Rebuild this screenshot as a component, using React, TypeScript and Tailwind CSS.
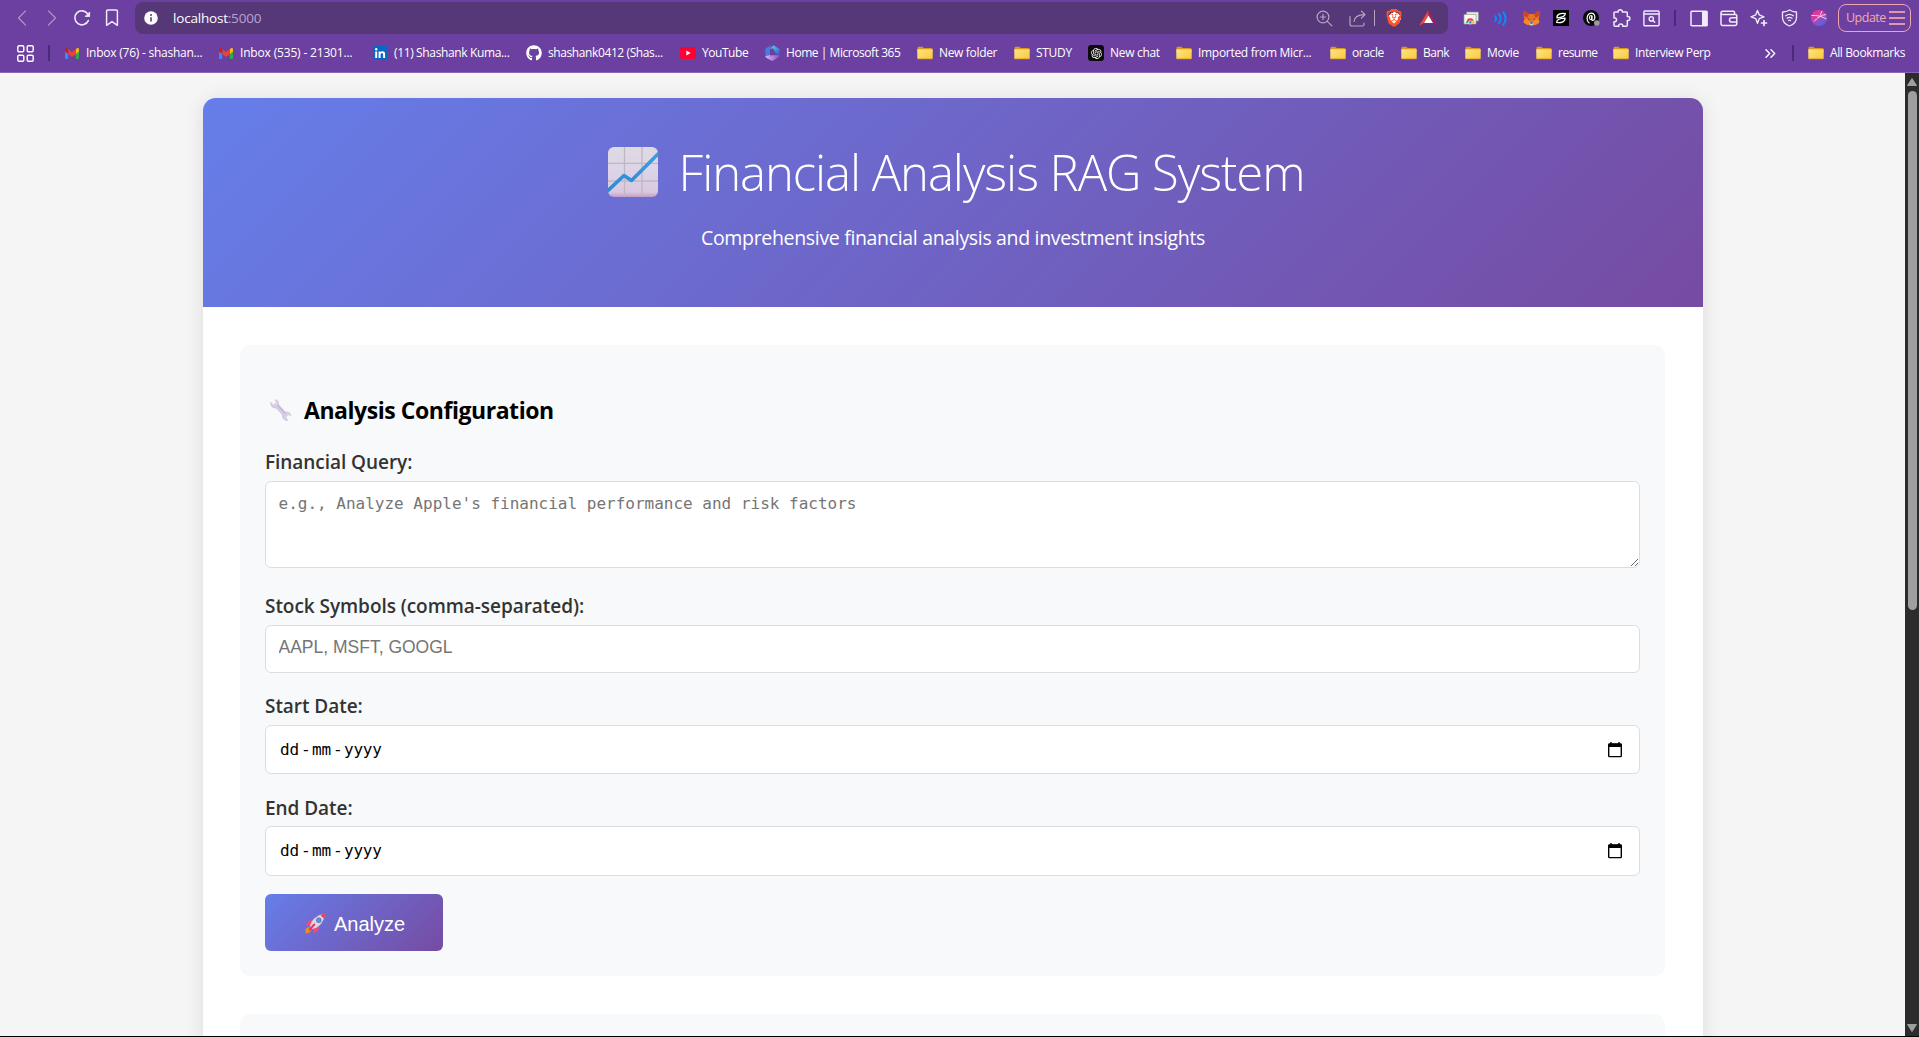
import React from "react";
import { FaBrave, FaGithub } from "react-icons/fa6";
import { RiOpenaiFill } from "react-icons/ri";

type Kids = { children?: React.ReactNode };

/* ---------- toolbar icons ---------- */

const stroke = { fill: "none", stroke: "currentColor", strokeLinecap: "round", strokeLinejoin: "round" } as const;

const Chevron = ({ right = false }: { right?: boolean }) => (
  <svg width="10" height="16" viewBox="0 0 10 16" {...stroke} strokeWidth="1.3">
    <path d={right ? "M1.5 1 8.5 8 1.5 15" : "M8.5 1 1.5 8 8.5 15"} />
  </svg>
);

const Reload = () => (
  <svg width="18" height="18" viewBox="0 0 18 18" {...stroke} strokeWidth="1.6">
    <path d="M15.3 11.6A7 7 0 1 1 14.6 4.8" />
    <path d="M16.6 3.4v4h-4z" fill="currentColor" strokeWidth="1" />
  </svg>
);

const BookmarkIcon = () => (
  <svg width="14" height="18" viewBox="0 0 14 18" {...stroke} strokeWidth="1.5">
    <path d="M2.6 1h8.8a1 1 0 0 1 1 1v14.3L7 12.6l-5.4 3.7V2a1 1 0 0 1 1-1z" />
  </svg>
);

const Info = () => (
  <svg width="14" height="14" viewBox="0 0 14 14">
    <circle cx="7" cy="7" r="6.8" fill="#fff" />
    <path d="M7 6.2v4.2" stroke="#563879" strokeWidth="1.6" />
    <circle cx="7" cy="4" r="1" fill="#563879" />
  </svg>
);

const ZoomIn = () => (
  <svg width="17" height="17" viewBox="0 0 17 17" {...stroke} strokeWidth="1.2">
    <circle cx="7" cy="7" r="5.9" />
    <path d="M11.3 11.3l4.6 4.6M7 4.3v5.4M4.3 7h5.4" />
  </svg>
);

const Share = () => (
  <svg width="17" height="17" viewBox="0 0 17 17" {...stroke} strokeWidth="1.2">
    <path d="M1 6.5V14a2 2 0 0 0 2 2h10.5a1.5 1.5 0 0 0 1.5-1.5V13" />
    <path d="M5 11.5C5.3 7 8 4.8 15.5 4.600M12.5 1.2 16 4.600 12.5 8" />
  </svg>
);

const Bat = () => (
  <svg width="19" height="16" viewBox="0 0 19 16">
    <path d="M9.5.3 0 16l5-3 4.5-7.5z" fill="#ff4724" />
    <path d="M9.5.3 19 16l-5-3-4.5-7.5z" fill="#9e1f63" />
    <path d="M0 16h19l-5-3H5z" fill="#662d91" />
    <path d="M9.5 5.5 14 13H5z" fill="#fff" />
  </svg>
);

const CardsIcon = () => (
  <svg width="16" height="16" viewBox="0 0 16 16">
    <path d="M3.5 2h12v9h-12z" fill="#e8eae8" stroke="#8a8f8a" strokeWidth=".7" />
    <path d="M1 4.5h12v9.5H1z" fill="#f6f8f6" stroke="#9a9f9a" strokeWidth=".7" />
    <path d="M3 13.5a4.2 4.2 0 0 1 2-4.1L7 12z" fill="#34a853" />
    <path d="M4 9.8a4.3 4.3 0 0 1 6.5 0L8.5 12H6z" fill="#ea4335" />
    <path d="M10.3 9.6a4.2 4.2 0 0 1 1.1 3.9H8.5z" fill="#fbbc05" />
    <circle cx="7.3" cy="12.4" r="1.7" fill="#4285f4" stroke="#fff" strokeWidth=".6" />
  </svg>
);

const Waves = () => (
  <svg width="14" height="15" viewBox="0 0 14 15" fill="none" stroke="#0a8cff" strokeWidth="2" strokeLinecap="round">
    <path d="M1.3 5.2a4 4 0 0 1 0 4.6M5 3a7 7 0 0 1 0 9M9.3 1.2a10 10 0 0 1 0 12.6" />
  </svg>
);

const Fox = () => (
  <svg width="17" height="16" viewBox="0 0 17 16">
    <path d="M.8.5 6 4h5l5.2-3.5.3 5-.9 4 .9 3-4 2.5-2.5.5h-3L4.5 15l-4-2.5.9-3-.9-4z" fill="#e8702a" />
    <path d="M.8.5 6 4 4.5 7.5.9 6zM16.2.5 11 4l1.5 3.5L16.1 6z" fill="#c9481d" />
    <path d="M1.4 9.5 6 9l1 4-2.5 2-4-2.5zM15.6 9.5 11 9l-1 4 2.5 2 4-2.5z" fill="#f5892f" />
    <path d="M4.5 8.5l2 .5-.3 1.3zM12.5 8.5l-2 .5.3 1.3z" fill="#23344a" />
    <path d="M7 12h3l.6 2.300-1 1H7.400l-1-1z" fill="#d8d0cc" />
    <path d="M7.5 12.2h2l.3 1.3H7.2z" fill="#23344a" />
  </svg>
);

const BlackSquare = () => (
  <svg width="16" height="16" viewBox="0 0 16 16">
    <path d="M0 0h16v16H0z" fill="#000" />
    <g fill="none" stroke="#fff" strokeLinecap="round" strokeWidth="1.3">
      <path d="M4 7.800C3.600 4.500 7.500 2.600 12.300 3.600 12.300 6 9.500 7.600 4 7.800z" />
      <path d="M12 8.200C12.400 11.500 8.500 13.400 3.700 12.400 3.700 10 6.500 8.400 12 8.200z" />
    </g>
  </svg>
);

const AtBadge = () => (
  <svg width="17" height="16" viewBox="0 0 17 16">
    <circle cx="8" cy="8" r="8" fill="#0b0b0b" />
    <path d="M6.5 13.2C4.2 12 3.6 8.5 4.6 5.8 5.8 2.6 10 2.2 11.4 5c1 2.3.2 5.4-1.6 5.400C8.500 10.400 8.300 8.500 9 5.500" fill="none" stroke="#fff" strokeWidth="1.2" />
    <ellipse cx="7.8" cy="7.6" rx="1.3" ry="2.1" fill="none" stroke="#fff" strokeWidth="1.1" />
    <circle cx="13.8" cy="13" r="2.8" fill="#9a9a9a" />
  </svg>
);

const Puzzle = () => (
  <svg width="19" height="19" viewBox="0 0 19 19" {...stroke} strokeWidth="1.5">
    <path d="M3 3h3.2C5.8 1.5 7 .8 8.2.8s2.5.7 2.1 2.2h4.2a.8.8 0 0 1 .8.8v3.8c1.6-.4 2.6.6 2.6 1.9s-1 2.3-2.6 1.9v4.8a1 1 0 0 1-1 1h-3.6c.3-1.4-.5-2.3-1.9-2.3s-2.3.9-1.9 2.3H3a1 1 0 0 1-1-1v-3.4c1.7.2 2.5-.8 2.5-2S3.7 8.7 2 8.900V4a1 1 0 0 1 1-1z" />
  </svg>
);

const SearchTab = () => (
  <svg width="17" height="17" viewBox="0 0 17 17" {...stroke} strokeWidth="1.4">
    <rect x=".9" y="1" width="15.2" height="14.8" rx="1" />
    <path d="M1 4h15" />
    <circle cx="8.3" cy="8.9" r="2.1" />
    <path d="M9.9 10.5l1.8 1.8" />
  </svg>
);

const Sidebar = () => (
  <svg width="18" height="17" viewBox="0 0 18 17">
    <rect x="1" y="1.2" width="16" height="14.6" rx=".8" fill="none" stroke="currentColor" strokeWidth="1.5" />
    <path d="M12 1h5.5v15H12z" fill="currentColor" />
  </svg>
);

const Wallet = () => (
  <svg width="18" height="17" viewBox="0 0 18 17" {...stroke} strokeWidth="1.5">
    <path d="M14.5 4.5V2.2a1 1 0 0 0-1-1H2.5A1.5 1.5 0 0 0 1 2.8c0 1 .7 1.7 1.5 1.7h13.2a1 1 0 0 1 1 1V14a1.5 1.5 0 0 1-1.5 1.5H2.5A1.5 1.5 0 0 1 1 14V2.8" />
    <path d="M16.7 7.7h-5a2.2 2.2 0 0 0 0 4.4h5" />
  </svg>
);

const Sparkle = () => (
  <svg width="18" height="18" viewBox="0 0 18 18" {...stroke} strokeWidth="1.4">
    <path d="M7.5 1.5l1.7 4.3 4.8 2-4.8 1.9-1.7 4.6-1.7-4.6L1 7.8l4.8-2z" />
    <path d="M14 11.5v5M11.5 14h5" strokeWidth="1.7" />
  </svg>
);

const Vpn = () => (
  <svg width="17" height="18" viewBox="0 0 17 18" {...stroke} strokeWidth="1.3">
    <path d="M8.5 1c2 1.3 4.5 2 7 2v5.5c0 4-3 7-7 8.5-4-1.5-7-4.5-7-8.5V3c2.5 0 5-.7 7-2z" />
    <path d="M4.7 6.8c2.2-1.6 5.4-1.6 7.6 0M6 9.2c1.5-1 3.5-1 5 0M7.5 11.5c.6-.4 1.4-.4 2 0" />
  </svg>
);

const Avatar = () => (
  <svg width="16" height="16" viewBox="0 0 16 16">
    <defs>
      <linearGradient id="av" x1="0.2" y1="0" x2="0.8" y2="1">
        <stop offset=".3" stopColor="#e0389a" />
        <stop offset="1" stopColor="#3a6cf0" />
      </linearGradient>
    </defs>
    <circle cx="8" cy="8" r="8" fill="url(#av)" />
    <path d="M.5 5.5C6 5 11 6.5 15.5 9M3 11.5C6 8 10 5 15 4.5M9 5.5l2-4.5" stroke="#fbd3ea" strokeWidth="1" fill="none" />
  </svg>
);

/* ---------- bookmark icons ---------- */

const Gmail = () => (
  <svg width="14" height="11" viewBox="0 0 14 11">
    <path d="M0 3h3.2v8H1a1 1 0 0 1-1-1z" fill="#4285f4" />
    <path d="M10.8 3H14v7a1 1 0 0 1-1 1h-2.2z" fill="#34a853" />
    <path d="M10.8 1.2 12 .3c.9-.6 2 0 2 1.1v2L10.8 6z" fill="#fbbc04" />
    <path d="M3.2 6V1.2L7 4l3.8-2.8V6L7 8.9z" fill="#ea4335" />
    <path d="M0 3.4v-2C0 .3 1.1-.3 2 .3l1.2.9V6z" fill="#c5221f" />
  </svg>
);

const LinkedIn = () => (
  <svg width="14" height="14" viewBox="0 0 14 14">
    <rect width="14" height="14" rx="1" fill="#0a66c2" />
    <circle cx="3.2" cy="3.3" r="1.2" fill="#fff" />
    <path d="M2.2 5.4h2V12h-2zM5.6 5.4h1.9v.9c.9-1.5 4.6-1.5 4.6 1.7v4h-2V8.6c0-2-2.5-1.8-2.5 0V12h-2z" fill="#fff" />
  </svg>
);

const YouTube = () => (
  <svg width="16" height="12" viewBox="0 0 16 12">
    <rect width="16" height="12" rx="3" fill="#f03" />
    <path d="M6.3 3.5v5l4.3-2.5z" fill="#fff" />
  </svg>
);

const M365 = () => (
  <svg width="15" height="16" viewBox="0 0 15 16">
    <defs>
      <linearGradient id="ma" x1="0" y1="0" x2="1" y2="1">
        <stop offset="0" stopColor="#66d8f2" />
        <stop offset="1" stopColor="#2b57c8" />
      </linearGradient>
      <linearGradient id="mb" x1="0" y1="0" x2="1" y2="0">
        <stop offset="0" stopColor="#d8b8f0" />
        <stop offset="1" stopColor="#8a4fc8" />
      </linearGradient>
    </defs>
    <path d="M6 .3 1.2 3A2 2 0 0 0 .3 4.700v6.600L3 12.700 5 11V4z" fill="#4a7be0" />
    <path d="M5 4 8.5.3l5.3 3.1a2 2 0 0 1 .9 1.7v5.2L10.5 8 8 3.5z" fill="url(#ma)" />
    <path d="M.3 11.3 5 10l9.7.3c0 .8-.3 1.3-1 1.7l-5.4 3.5a2 2 0 0 1-2 0L1.2 12.7z" fill="url(#mb)" />
    <path d="M5 4.5 8 3.5l2.5 4.5v2L5 11.5z" fill="#6c40a0" opacity=".4" />
  </svg>
);

const Folder = () => (
  <svg width="16" height="14" viewBox="0 0 16 14">
    <defs>
      <linearGradient id="fo" x1="0" y1="0" x2="1" y2="1">
        <stop offset="0" stopColor="#ffe486" />
        <stop offset="1" stopColor="#fbc93a" />
      </linearGradient>
    </defs>
    <path d="M.5 2A1.3 1.3 0 0 1 1.8.7h3.5l1.500 1.300h7.400a1.300 1.300 0 0 1 1.300 1.300V6H.5z" fill="#d9991b" />
    <path d="M.3 3.2h15.400v8.700a1.200 1.200 0 0 1-1.200 1.200H1.500A1.200 1.200 0 0 1 .3 11.900z" fill="url(#fo)" />
    <path d="M.6 12.9h14.800" stroke="#c9961f" strokeWidth=".8" />
  </svg>
);

const ChatGpt = () => (
  <span className="flex size-4 items-center justify-center rounded-[3px] bg-[#0c0c0c] text-white">
    <RiOpenaiFill size={13} />
  </span>
);

const AppsGrid = () => (
  <svg width="17" height="17" viewBox="0 0 17 17" fill="none" stroke="currentColor" strokeWidth="1.4">
    <rect x=".8" y=".8" width="6" height="6" rx="1.2" />
    <rect x="10.2" y=".8" width="6" height="6" rx="1.2" />
    <rect x=".8" y="10.2" width="6" height="6" rx="1.2" />
    <rect x="10.2" y="10.2" width="6" height="6" rx="1.2" />
  </svg>
);

/* ---------- page illustrations ---------- */

const ChartEmoji = () => (
  <svg className="shrink-0" width="50" height="50" viewBox="0 0 50 50">
    <defs>
      <linearGradient id="cb" x1="0" y1="0" x2="0" y2="1">
        <stop offset="0" stopColor="#dedbe2" />
        <stop offset=".5" stopColor="#ddd3e9" />
        <stop offset=".9" stopColor="#d9c8e0" />
        <stop offset="1" stopColor="#c49fc4" />
      </linearGradient>
      <linearGradient id="cl" x1="0" y1="0" x2="0" y2="1">
        <stop offset="0" stopColor="#2fa3ea" />
        <stop offset="1" stopColor="#3487cf" />
      </linearGradient>
      <clipPath id="cc">
        <rect width="50" height="50" rx="6" />
      </clipPath>
    </defs>
    <g clipPath="url(#cc)">
      <rect width="50" height="50" fill="url(#cb)" />
      <path d="M16.5 0v50M34 0v50M0 16.3h50M0 34h50" stroke="#bfb7c4" strokeWidth="1.3" />
      <path d="M-1 44.5 16 28.5l7.5 5L51 6" fill="none" stroke="url(#cl)" strokeWidth="3.6" strokeLinejoin="round" />
    </g>
  </svg>
);

const WrenchEmoji = () => (
  <svg className="shrink-0" width="22" height="22" viewBox="0 0 22 22">
    <path d="M.8 3.200 3.600 5.600 6 3.600 4.200.5C7.800.2 9.800 2.700 9 5.500l6.600 7.200c3-.6 6 1.500 5.900 5l-2.800-1.700-2.300 1.900 1.500 3.500c-3.600.2-6-2.400-5.300-5.600L6 8.700C3 9.400.3 6.800.8 3.200z" fill="#d9d0e5" />
    <path d="M7.400 6l8 8.700" stroke="#c6b4de" strokeWidth="1.6" />
    <path d="M.8 3.200C.3 6.800 3 9.400 6 8.700l6.600 7.100c-.7 3.200 1.700 5.800 5.300 5.600" fill="none" stroke="#c4b2d6" strokeWidth=".7" />
  </svg>
);

const RocketEmoji = () => (
  <svg className="shrink-0" width="21" height="21" viewBox="0 0 21 21">
    <path d="M1 15.5c2-2 4.5-1.5 5 .5s-1.5 4-5 4.5c-.7-1.5-.7-3.5 0-5z" fill="#f08a2c" />
    <path d="M7.5 7.5C4.5 6.6 2.3 8.5 1 12.2l5 .8zM13.5 13.5c.9 3-1 5.5-4.7 6.8l-.8-5z" fill="#f8457d" />
    <path d="M5 13.5C6 7.5 11.5 1.8 20 .8c-1 8.7-6.5 14.2-12.5 15.2z" fill="#dcd5e2" />
    <path d="M15.5 2c1.5-.7 3-1.1 4.5-1.2-.1 1.6-.5 3.2-1.2 4.7z" fill="#f5315c" />
    <circle cx="13.8" cy="7.3" r="2.7" fill="#7a6fa8" />
    <circle cx="13.8" cy="7.3" r="1.9" fill="#3f9fea" />
    <path d="M9.3 11.500l-4.600 5" stroke="#f5315c" strokeWidth="2" strokeLinecap="round" />
  </svg>
);

const Calendar = () => (
  <svg width="14" height="16" viewBox="0 0 14 16">
    <path d="M3 0v3M11 0v3" stroke="#000" strokeWidth="1.4" />
    <rect x=".7" y="2" width="12.6" height="12.6" rx=".8" fill="none" stroke="#000" strokeWidth="1.4" />
    <path d="M.5 1.7h13V5H.5z" fill="#000" />
  </svg>
);

/* ---------- browser chrome ---------- */

const Cell = ({ children }: Kids) => <span className="flex w-[30px] shrink-0 items-center justify-center">{children}</span>;

const Toolbar = () => (
  <div className="flex h-9 shrink-0 items-center pl-[7px] text-[#f1eaf8]">
    <span className="flex text-[#a98fc9]">
      <Cell><Chevron /></Cell>
      <Cell><Chevron right /></Cell>
    </span>
    <Cell><Reload /></Cell>
    <Cell><BookmarkIcon /></Cell>
    <div className="ml-2 flex h-8 w-[1313px] shrink-0 items-center rounded-lg bg-[#563879] pr-[3px] pl-[9px]">
      <Info />
      <span className="ml-[15px] text-[13.5px] tracking-[-0.2px] text-white">
        localhost<span className="text-[#b8a3cf]">:5000</span>
      </span>
      <span className="ml-auto flex items-center text-[#b3a5c4]">
        <span className="flex w-[34px] justify-center"><ZoomIn /></span>
        <span className="flex w-[33px] justify-center"><Share /></span>
        <span className="mr-0.5 h-4 w-px bg-[#b3a5c4]" />
        <span className="flex w-[34px] justify-center">
          <span className="flex size-[17px] items-center justify-center bg-[radial-gradient(circle,#fff_50%,transparent_52%)] text-[#fb542b]">
            <FaBrave size={18} className="shrink-0" />
          </span>
        </span>
        <span className="flex w-[34px] justify-center"><Bat /></span>
      </span>
    </div>
    <div className="ml-2 flex items-center">
      <Cell><CardsIcon /></Cell>
      <Cell><Waves /></Cell>
      <Cell><Fox /></Cell>
      <Cell><BlackSquare /></Cell>
      <Cell><AtBadge /></Cell>
      <Cell><Puzzle /></Cell>
      <Cell><SearchTab /></Cell>
      <span className="flex w-[18px] justify-center"><span className="h-4 w-0.5 bg-[#4b2a75]" /></span>
      <Cell><Sidebar /></Cell>
      <Cell><Wallet /></Cell>
      <Cell><Sparkle /></Cell>
      <Cell><Vpn /></Cell>
      <Cell><Avatar /></Cell>
    </div>
    <div className="ml-1 flex h-7 w-[73px] shrink-0 items-center justify-between rounded-lg border border-[#f0a5b0] pr-[5px] pl-[7px] text-[#f5a9ae]">
      <span className="text-[12.5px] tracking-[-0.5px]">Update</span>
      <span className="flex flex-col gap-[4px]">
        <span className="h-0.5 w-4 bg-[#dc97ac]" />
        <span className="h-0.5 w-4 bg-[#dc97ac]" />
        <span className="h-0.5 w-4 bg-[#dc97ac]" />
      </span>
    </div>
  </div>
);

const bookmarks: { label: string; icon: React.ReactNode; cls: string }[] = [
  { label: "Inbox (76) - shashan...", icon: <Gmail />, cls: "w-[154px] tracking-[-0.24px]" },
  { label: "Inbox (535) - 21301...", icon: <Gmail />, cls: "w-[154px] tracking-[-0.17px]" },
  { label: "(11) Shashank Kuma...", icon: <LinkedIn />, cls: "w-[154px] tracking-[-0.36px]" },
  { label: "shashank0412 (Shas...", icon: <FaGithub size={16} />, cls: "w-[154px] tracking-[-0.4px]" },
  { label: "YouTube", icon: <YouTube />, cls: "w-[84px] tracking-[-0.45px]" },
  { label: "Home | Microsoft 365", icon: <M365 />, cls: "w-[153px] tracking-[-0.45px]" },
  { label: "New folder", icon: <Folder />, cls: "w-[97px] tracking-[-0.33px]" },
  { label: "STUDY", icon: <Folder />, cls: "w-[74px] tracking-[-0.3px]" },
  { label: "New chat", icon: <ChatGpt />, cls: "w-[88px] tracking-[-0.3px]" },
  { label: "Imported from Micr...", icon: <Folder />, cls: "w-[154px] tracking-[-0.3px]" },
  { label: "oracle", icon: <Folder />, cls: "w-[71px] tracking-[-0.4px]" },
  { label: "Bank", icon: <Folder />, cls: "w-[64px] tracking-[-0.5px]" },
  { label: "Movie", icon: <Folder />, cls: "w-[71px] tracking-[-0.4px]" },
  { label: "resume", icon: <Folder />, cls: "w-[77px] tracking-[-0.5px]" },
  { label: "Interview Perp", icon: <Folder />, cls: "w-[152px] tracking-[-0.4px]" },
];

const Bookmark = ({ label, icon, cls }: { label: string; icon: React.ReactNode; cls: string }) => (
  <span className={`flex shrink-0 items-center gap-1.5 whitespace-nowrap ${cls}`}>
    <span className="flex w-4 shrink-0 justify-center">{icon}</span>
    {label}
  </span>
);

const BookmarksBar = () => (
  <div className="flex h-[34px] shrink-0 items-center pl-[17px] text-xs text-white">
    <AppsGrid />
    <span className="ml-3.5 h-4 w-0.5 bg-[#4b2a75]" />
    <div className="ml-3.5 flex">
      {bookmarks.map((b) => (
        <Bookmark key={b.label} {...b} />
      ))}
    </div>
    <svg width="11" height="9" viewBox="0 0 11 9" {...stroke} strokeWidth="1.4">
      <path d="M1 .8l3.7 3.7L1 8.2M6 .8l3.7 3.7L6 8.2" />
    </svg>
    <span className="ml-4 h-4 w-0.5 bg-[#4b2a75]" />
    <span className="ml-3.5 flex">
      <Bookmark label="All Bookmarks" icon={<Folder />} cls="tracking-[-0.38px]" />
    </span>
  </div>
);

/* ---------- page ---------- */

const Label = ({ children, cls }: Kids & { cls: string }) => (
  <label className={`block h-[26px] text-[19px] leading-[26px] font-semibold tracking-[-0.05px] text-[#333] ${cls}`}>{children}</label>
);

const box = "flex w-full items-center rounded-md border border-[#ddd] bg-white";

const DateField = ({ cls }: { cls: string }) => (
  <div className={`${box} justify-between pr-[17px] pl-[14px] ${cls}`}>
    <span className="flex font-['DejaVu_Sans_Mono',monospace] text-base tracking-[-0.2px] text-black">
      <span className="w-[21px]">dd</span>
      <span className="w-[11px]">-</span>
      <span className="w-[21px]">mm</span>
      <span className="w-[11px]">-</span>
      <span>yyyy</span>
    </span>
    <Calendar />
  </div>
);

const Hero = () => (
  <header className="flex h-[209px] flex-col items-center bg-[linear-gradient(135deg,#667eea_0%,#764ba2_100%)] text-white">
    <div className="mt-10 flex h-[68px] items-center gap-[21px] pl-[6px]">
      <span className="-mt-px"><ChartEmoji /></span>
      <h1 className="text-[49px] leading-[68px] font-light tracking-[-1.05px] whitespace-nowrap">Financial Analysis RAG System</h1>
    </div>
    <p className="mt-[18px] text-[19.5px] leading-[28px] tracking-[-0.33px]">
      Comprehensive financial analysis and investment insights
    </p>
  </header>
);

const ConfigForm = () => (
  <section className="rounded-[10px] bg-[#f8f9fa] px-[25px] pt-[45px] pb-[25px]">
    <h3 className="flex h-10 items-center gap-3 pl-[5px] text-[23px] font-bold tracking-[-0.45px] text-black">
      <WrenchEmoji />
      Analysis Configuration
    </h3>
    <Label cls="mt-[19px]">Financial Query:</Label>
    <textarea
      className="mt-1.5 block h-[87px] w-full rounded-md border border-[#ddd] bg-white px-[12.5px] py-[11px] font-['DejaVu_Sans_Mono',monospace] text-base leading-[22px] placeholder:text-[#757575]"
      placeholder="e.g., Analyze Apple's financial performance and risk factors"
    />
    <Label cls="mt-[25px]">Stock Symbols (comma-separated):</Label>
    <input
      className={`${box} mt-1.5 h-12 px-[12.5px] pb-[3px] font-['Liberation_Sans',Arial,sans-serif] text-[17.5px] placeholder:text-[#757575]`}
      placeholder="AAPL, MSFT, GOOGL"
    />
    <Label cls="mt-5">Start Date:</Label>
    <DateField cls="mt-1.5 h-[49px]" />
    <Label cls="mt-[21px]">End Date:</Label>
    <DateField cls="mt-[5px] h-[50px]" />
    <button className="mt-[18px] flex h-[57px] w-[178px] items-center justify-center gap-[8px] rounded-md bg-[linear-gradient(135deg,#667eea_0%,#764ba2_100%)] pt-0.5 pl-0.5 font-['Liberation_Sans',Arial,sans-serif] text-xl text-white">
      <RocketEmoji />
      <span>Analyze</span>
    </button>
  </section>
);

const Scrollbar = () => (
  <div className="flex w-3.5 shrink-0 flex-col items-center bg-[#2c2c2c] pt-[5px] pb-[4px]">
    <svg width="10" height="8" viewBox="0 0 10 8"><path d="M5 .5 9.5 7.5H.5z" fill="#9f9f9f" stroke="#9f9f9f" strokeLinejoin="round" /></svg>
    <div className="mt-[5px] h-[519px] w-[9px] rounded-full bg-[#9f9f9f]" />
    <svg className="mt-auto" width="10" height="8" viewBox="0 0 10 8"><path d="M5 7.5 9.5.5H.5z" fill="#9f9f9f" stroke="#9f9f9f" strokeLinejoin="round" /></svg>
  </div>
);

export default function App() {
  return (
    <div className="flex h-[1037px] w-[1919px] flex-col overflow-hidden border-b border-black bg-[#f5f5f5] font-['Open_Sans','Noto_Sans',sans-serif]">
      <div className="flex h-[73px] shrink-0 flex-col border-b border-[#8a66b5] bg-[#6c40a0]">
        <Toolbar />
        <BookmarksBar />
      </div>
      <div className="flex min-h-0 flex-1">
        <main className="min-w-0 flex-1 overflow-hidden pt-[25px] pl-[203px]">
          <div className="h-[1100px] w-[1500px] overflow-hidden rounded-[12.5px] bg-white shadow-[0_2px_20px_rgba(0,0,0,0.1)]">
            <Hero />
            <div className="flex flex-col gap-[38px] pt-[38px] pr-[38px] pl-[37px]">
              <ConfigForm />
              <section className="h-[200px] rounded-[10px] bg-[#f8f9fa]" />
            </div>
          </div>
        </main>
        <Scrollbar />
      </div>
    </div>
  );
}
